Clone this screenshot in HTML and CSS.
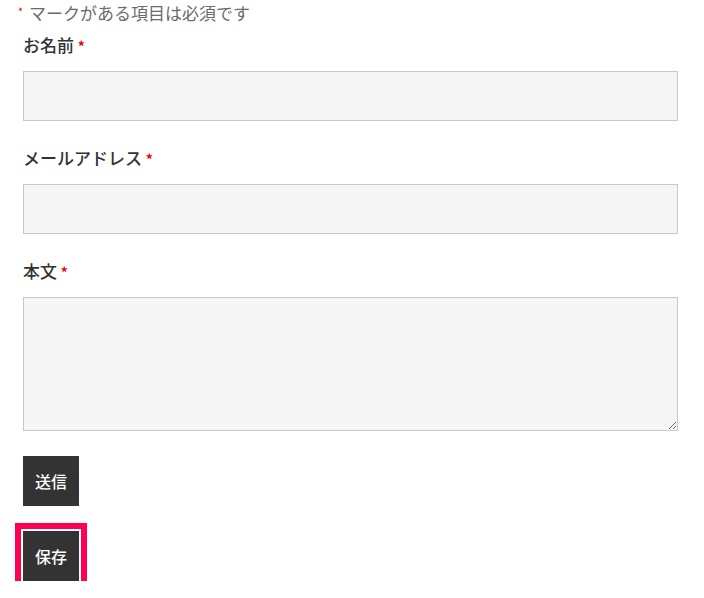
FILE: index.html
```html
<!DOCTYPE html>
<html lang="ja">
<head>
  <meta charset="UTF-8">
  <title>お問い合わせ</title>
  <link rel="stylesheet" href="styles.css">
</head>
<body>
  <form class="contact-form">
    <p class="required-note"><span class="req">*</span> マークがある項目は必須です</p>

    <div class="field">
      <label for="name">お名前 <span class="req">*</span></label>
      <input type="text" id="name">
    </div>

    <div class="field">
      <label for="email">メールアドレス <span class="req">*</span></label>
      <input type="email" id="email">
    </div>

    <div class="field">
      <label for="message">本文 <span class="req">*</span></label>
      <textarea id="message"></textarea>
    </div>

    <div class="actions">
      <button type="button">送信</button>
      <button type="button" class="selected">保存</button>
    </div>
  </form>
</body>
</html>
```

FILE: styles.css
```css
body {
  margin: 0;
  background-color: #ffffff;
  font-family: "Noto Sans CJK JP", "Noto Sans", sans-serif;
  color: #333;
}

.contact-form {
  padding: 0 26px 0 23px;
}

.required-note {
  margin: 0 0 7px -5px;
  font-size: 17px;
  line-height: 26px;
  color: #6b6b6b;
}

.required-note .req {
  margin-right: 2px;
  font-size: 11px;
  vertical-align: top;
  line-height: 22px;
}

.req {
  color: #e00;
}

.field {
  margin-bottom: 25px;
}

.field label {
  display: block;
  margin-bottom: 13px;
  font-size: 17px;
  font-weight: 500;
  line-height: 24px;
}

.field label .req {
  font-size: 14px;
  font-weight: bold;
}

.field input,
.field textarea {
  display: block;
  box-sizing: border-box;
  width: 100%;
  height: 50px;
  padding: 8px 12px;
  border: 1px solid #c8c8c8;
  background-color: #f5f5f5;
  font-family: inherit;
  font-size: 16px;
}

.field textarea {
  height: 134px;
}

.actions {
  display: flex;
  flex-direction: column;
  align-items: flex-start;
  gap: 25px;
}

.actions button {
  height: 50px;
  padding: 0 12px;
  border: none;
  background-color: #333;
  color: #fff;
  font-family: inherit;
  font-size: 16px;
  font-weight: 500;
  cursor: pointer;
}

.actions button.selected {
  outline: 6px solid #ff0055;
  outline-offset: 2px;
}
```
